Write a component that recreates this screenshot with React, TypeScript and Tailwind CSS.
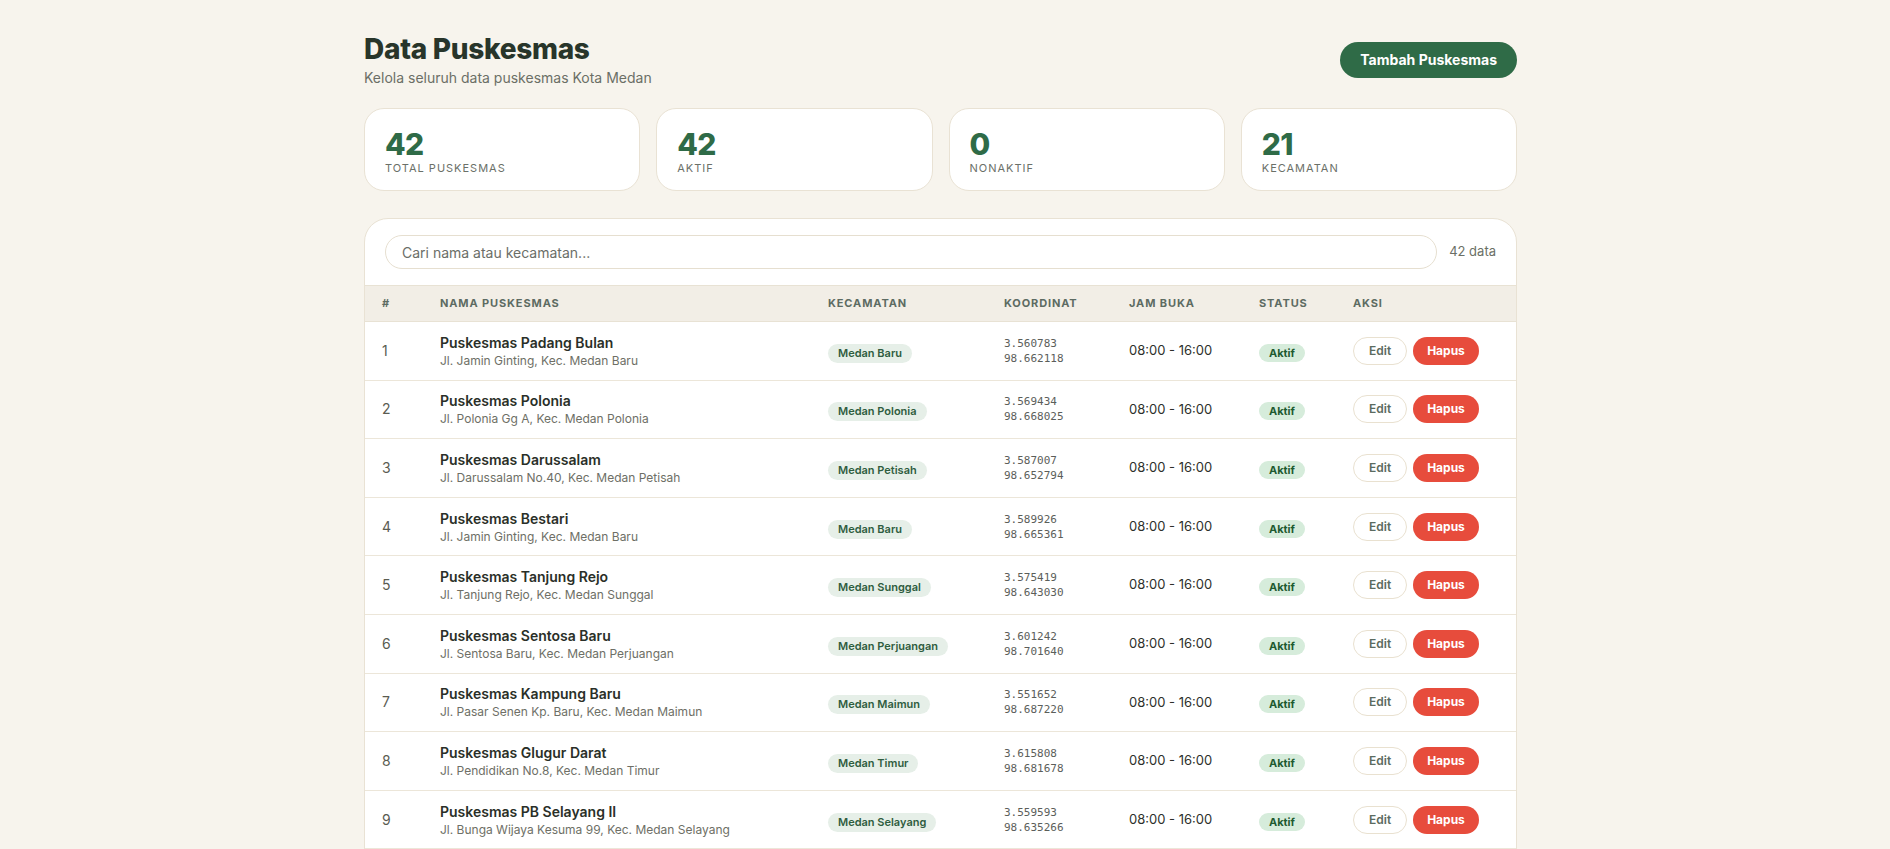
import { useState } from 'react';

type Puskesmas = {
  nama: string;
  alamat: string;
  kecamatan: string;
  lat: string;
  lng: string;
  jam: string;
  aktif: boolean;
};

const rows: Puskesmas[] = [
  { nama: 'Puskesmas Padang Bulan', alamat: 'Jl. Jamin Ginting, Kec. Medan Baru', kecamatan: 'Medan Baru', lat: '3.560783', lng: '98.662118', jam: '08:00 - 16:00', aktif: true },
  { nama: 'Puskesmas Polonia', alamat: 'Jl. Polonia Gg A, Kec. Medan Polonia', kecamatan: 'Medan Polonia', lat: '3.569434', lng: '98.668025', jam: '08:00 - 16:00', aktif: true },
  { nama: 'Puskesmas Darussalam', alamat: 'Jl. Darussalam No.40, Kec. Medan Petisah', kecamatan: 'Medan Petisah', lat: '3.587007', lng: '98.652794', jam: '08:00 - 16:00', aktif: true },
  { nama: 'Puskesmas Bestari', alamat: 'Jl. Jamin Ginting, Kec. Medan Baru', kecamatan: 'Medan Baru', lat: '3.589926', lng: '98.665361', jam: '08:00 - 16:00', aktif: true },
  { nama: 'Puskesmas Tanjung Rejo', alamat: 'Jl. Tanjung Rejo, Kec. Medan Sunggal', kecamatan: 'Medan Sunggal', lat: '3.575419', lng: '98.643030', jam: '08:00 - 16:00', aktif: true },
  { nama: 'Puskesmas Sentosa Baru', alamat: 'Jl. Sentosa Baru, Kec. Medan Perjuangan', kecamatan: 'Medan Perjuangan', lat: '3.601242', lng: '98.701640', jam: '08:00 - 16:00', aktif: true },
  { nama: 'Puskesmas Kampung Baru', alamat: 'Jl. Pasar Senen Kp. Baru, Kec. Medan Maimun', kecamatan: 'Medan Maimun', lat: '3.551652', lng: '98.687220', jam: '08:00 - 16:00', aktif: true },
  { nama: 'Puskesmas Glugur Darat', alamat: 'Jl. Pendidikan No.8, Kec. Medan Timur', kecamatan: 'Medan Timur', lat: '3.615808', lng: '98.681678', jam: '08:00 - 16:00', aktif: true },
  { nama: 'Puskesmas PB Selayang II', alamat: 'Jl. Bunga Wijaya Kesuma 99, Kec. Medan Selayang', kecamatan: 'Medan Selayang', lat: '3.559593', lng: '98.635266', jam: '08:00 - 16:00', aktif: true },
  { nama: 'Puskesmas Sunggal', alamat: 'Jl. Sunggal No.12, Kec. Medan Sunggal', kecamatan: 'Medan Sunggal', lat: '3.583310', lng: '98.617450', jam: '08:00 - 16:00', aktif: true },
  { nama: 'Puskesmas Helvetia', alamat: 'Jl. Kemuning Raya, Kec. Medan Helvetia', kecamatan: 'Medan Helvetia', lat: '3.612540', lng: '98.634120', jam: '08:00 - 16:00', aktif: true },
];

const stats = [
  { value: '42', label: 'Total Puskesmas' },
  { value: '42', label: 'Aktif' },
  { value: '0', label: 'Nonaktif' },
  { value: '21', label: 'Kecamatan' },
];

const cols = 'grid grid-cols-[58px_388px_176px_125px_130px_94px_1fr]';
const heads = ['#', 'Nama Puskesmas', 'Kecamatan', 'Koordinat', 'Jam Buka', 'Status', 'Aksi'];

export default function App() {
  const [query, setQuery] = useState('');

  return (
    <div className="min-h-screen bg-[#f7f4ed] pr-[9px] font-['Inter',sans-serif] text-[#2a2f28]">
      <div className="mx-auto max-w-[1153px] pt-8 pb-10">
        {/* Page header */}
        <div className="flex items-center justify-between">
          <div>
            <h1 className="text-[28px] font-extrabold leading-[34px] tracking-[-0.01em] text-[#28352a]">
              Data Puskesmas
            </h1>
            <p className="mt-0.5 text-sm text-[#6b6f66]">Kelola seluruh data puskesmas Kota Medan</p>
          </div>
          <button className="h-9 rounded-full bg-[#2f6b47] px-5 text-sm font-bold text-white">
            Tambah Puskesmas
          </button>
        </div>

        {/* Summary cards */}
        <div className="mt-5 grid grid-cols-4 gap-4">
          {stats.map((s) => (
            <div key={s.label} className="rounded-[20px] border border-[#e9e2d4] bg-white px-5 pt-5 pb-[14px]">
              <div className="text-[30px] font-extrabold leading-[30px] tracking-[-0.02em] text-[#2f6b47]">{s.value}</div>
              <div className="mt-px text-[11px] uppercase leading-4 tracking-[0.09em] text-[#6b7068]">{s.label}</div>
            </div>
          ))}
        </div>

        {/* Table card */}
        <div className="mt-[27px] overflow-hidden rounded-3xl border border-[#e9e2d4] bg-white">
          <div className="flex items-center gap-3 px-5 py-4">
            <input
              value={query}
              onChange={(e) => setQuery(e.target.value)}
              placeholder="Cari nama atau kecamatan..."
              className="h-[34px] flex-1 rounded-full border border-[#e6dfd0] px-4 text-sm outline-none placeholder:text-[#6b6e68]"
            />
            <span className="text-[13px] text-[#6b6f66]">42 data</span>
          </div>

          <div className={`${cols} h-[37px] items-center border-y border-[#e8e2d4] bg-[#f2eee6]`}>
            {heads.map((h) => (
              <div key={h} className="px-[17px] text-[11px] font-bold uppercase tracking-[0.08em] text-[#5d6b62]">
                {h}
              </div>
            ))}
          </div>

          {rows.map((r, i) => (
            <div key={r.nama} className={`${cols} items-center border-b border-[#ece6d9] py-[10.8px]`}>
              <div className="px-[17px] text-sm text-[#5a5c52]">{i + 1}</div>
              <div className="px-[17px]">
                <div className="text-sm font-semibold leading-5 text-[#2a2f28]">{r.nama}</div>
                <div className="text-xs leading-4 text-[#6e6f66]">{r.alamat}</div>
              </div>
              <div className="px-[17px]">
                <span className="inline-block rounded-full bg-[#e6efe8] px-2.5 py-[2px] text-[11px] font-semibold leading-[15px] text-[#2f5d40]">
                  {r.kecamatan}
                </span>
              </div>
              <div className="px-[17px] font-['DejaVu_Sans_Mono',monospace] text-[11px] leading-[15px] text-[#5b5e5a]">
                <div>{r.lat}</div>
                <div>{r.lng}</div>
              </div>
              <div className="px-[17px] text-[13px] text-[#2d302b]">{r.jam}</div>
              <div className="px-[17px]">
                <span className="inline-block rounded-full bg-[#d6ecdb] px-2.5 py-[2px] text-[11px] font-bold leading-[14px] text-[#1e5a30]">
                  {r.aktif ? 'Aktif' : 'Nonaktif'}
                </span>
              </div>
              <div className="flex items-center gap-1.5 px-[17px]">
                <button className="h-7 rounded-full border border-[#e9e1d0] px-[15px] text-xs font-semibold text-[#5a6b60]">
                  Edit
                </button>
                <button className="h-7 rounded-full bg-[#e74c3c] px-[14px] text-xs font-bold text-white">
                  Hapus
                </button>
              </div>
            </div>
          ))}
        </div>
      </div>
    </div>
  );
}
